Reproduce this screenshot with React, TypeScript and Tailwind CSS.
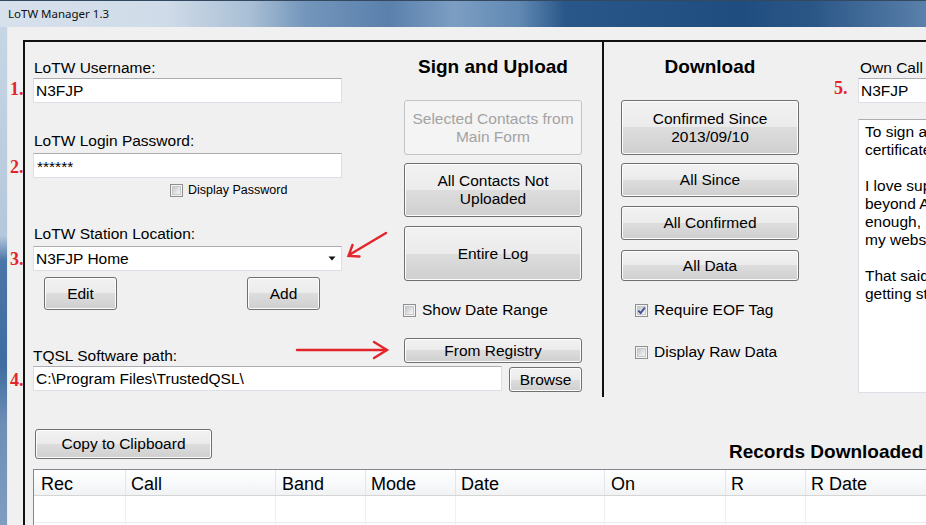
import React from 'react';

type KnopfProps = { children: React.ReactNode; className?: string; disabled?: boolean };

// Windows 7 style push button
const Knopf = ({ children, className = '', disabled = false }: KnopfProps) => (
  <div
    className={
      'flex shrink-0 items-center justify-center rounded-[3px] border text-center text-[15.5px] leading-[18px] ' +
      (disabled
        ? 'border-[#c2c4c6] bg-[#f4f4f4] text-[#a3a3a3] '
        : 'border-[#707070] bg-[linear-gradient(180deg,#f2f2f2_0%,#ebebeb_50%,#dddddd_50%,#cfcfcf_100%)] shadow-[inset_0_0_0_1px_#fcfcfc] ') +
      className
    }>
    {children}
  </div>
);

const Haken = ({ checked = false }: { checked?: boolean }) => (
  <span className="relative flex h-[13px] w-[13px] shrink-0 border border-[#8e8f8f] bg-[#f4f4f4] p-[1px]">
    <span className="flex-1 border border-[#c6c8ca] bg-[linear-gradient(135deg,#c3c7cb_0%,#e3e4e6_60%,#f6f6f6_100%)]" />
    {checked && (
      <svg className="absolute left-[1px] top-[1px]" width="9" height="9" viewBox="0 0 9 9">
        <path d="M1.3 4.6 L3.6 7 L7.8 1.6" fill="none" stroke="#3f5494" strokeWidth="1.9" />
      </svg>
    )}
  </span>
);

const Feld = ({ children, className = '' }: { children?: React.ReactNode; className?: string }) => (
  <div
    className={
      'flex shrink-0 items-center border border-[#dbdfe6] border-t-[#abadb3] bg-white pl-[2px] text-[15.5px] ' +
      className
    }>
    {children}
  </div>
);

const Nummer = ({ n, className }: { n: string; className: string }) => (
  <span
    className={
      "absolute font-['Liberation_Serif',serif] text-[18px] font-bold leading-[18px] text-[#e3242b] " +
      className
    }>
    {n}
  </span>
);

const spalten = [
  { name: 'Rec', w: 'w-[92px] pl-[7px]' },
  { name: 'Call', w: 'w-[150px] pl-[5px]' },
  { name: 'Band', w: 'w-[90px] pl-[6px]' },
  { name: 'Mode', w: 'w-[90px] pl-[5px]' },
  { name: 'Date', w: 'w-[149px] pl-[5px]' },
  { name: 'On', w: 'w-[121px] pl-[6px]' },
  { name: 'R', w: 'w-[80px] pl-[5px]' },
  { name: 'R Date', w: 'w-[150px] pl-[5px]' },
];

const infoText = [
  'To sign and upload your contacts, you need a',
  'certificate from the ARRL and TQSL installed.',
  '',
  'I love supporting LoTW, but it is well',
  'beyond AC Log to explain it all. Oddly',
  'enough, I get many questions, so please see',
  'my website for more details and links.',
  '',
  'That said, here are a few hints for',
  'getting started with the upload.',
];

const App = () => {
  return (
    <div className="relative h-[525px] w-[926px] overflow-hidden bg-[#6f8fb5] font-['Liberation_Sans',Arial,sans-serif] text-black">
      {/* title bar */}
      <div className="flex h-[27px] items-center border-t border-[#34485f] bg-[linear-gradient(90deg,#d6e1ec_0%,#cfdbe8_18%,#a9bfd5_27%,#7396bb_33%,#5a80ac_42%,#7c9ec3_49%,#6189b3_56%,#2a5789_61%,#204d80_80%,#2b5787_88%,#5a80ab_100%)] pl-[8px]">
        <span className="font-['Noto_Sans',sans-serif] text-[11.5px] leading-[16px] text-[#101010]">LoTW Manager 1.3</span>
      </div>

      <div className="flex h-[498px]">
        {/* window frame, left */}
        <div className="w-[8px] shrink-0 border-r border-[#e4ebf2] bg-[linear-gradient(180deg,#c7d6e5_0%,#b4c7db_42%,#4a75a8_47%,#3f6ca1_68%,#6f8fb6_80%,#7e9dc0_100%)]" />

        {/* client area */}
        <div className="flex-1 bg-[#f0f0f0] pl-[15px] pt-[13px]">
          <div className="flex h-full flex-col border-l-2 border-t-2 border-[#111]">
            {/* upper section */}
            <div className="flex h-[355px] shrink-0">
              {/* left part: fields + sign/upload */}
              <div className="flex w-[579px] shrink-0 flex-col border-r-2 border-[#111] pl-[8px]">
                <div className="flex">
                  {/* fields */}
                  <div className="flex w-[309px] shrink-0 flex-col">
                    <div className="ml-[1px] mt-[17px] h-[18px] text-[15.5px] leading-[18px]">LoTW Username:</div>
                    <Feld className="mt-[1px] h-[25px]">N3FJP</Feld>

                    <div className="ml-[1px] mt-[29px] h-[18px] text-[15.5px] leading-[18px]">LoTW Login Password:</div>
                    <Feld className="mt-[3px] h-[25px] items-start pl-[3px] pt-[1px] text-[13px]">******</Feld>

                    <div className="ml-[137px] mt-[5px] flex h-[14px] items-center gap-[5px]">
                      <Haken />
                      <span className="text-[12.5px] leading-[14px]">Display Password</span>
                    </div>

                    <div className="ml-[1px] mt-[28px] h-[18px] text-[15.5px] leading-[18px]">LoTW Station Location:</div>
                    <Feld className="mt-[3px] h-[25px] justify-between pr-[5px]">
                      <span>N3FJP Home</span>
                      <svg width="8" height="5" viewBox="0 0 8 5">
                        <polygon points="0.5,0.5 7.5,0.5 4,4.5" fill="#111" />
                      </svg>
                    </Feld>

                    <div className="mt-[6px] flex h-[33px]">
                      <Knopf className="ml-[11px] w-[73px]">Edit</Knopf>
                      <Knopf className="ml-[130px] w-[73px]">Add</Knopf>
                    </div>

                    <div className="mt-[37px] h-[18px] text-[15.5px] leading-[18px]">TQSL Software path:</div>
                  </div>

                  {/* sign and upload */}
                  <div className="ml-[62px] flex w-[178px] shrink-0 flex-col">
                    <div className="mt-[14px] h-[22px] whitespace-nowrap text-center text-[19px] font-bold leading-[22px]">Sign and Upload</div>
                    <Knopf disabled className="mt-[22px] h-[55px]">
                      Selected Contacts from
                      <br />
                      Main Form
                    </Knopf>
                    <Knopf className="mt-[8px] h-[54px]">
                      All Contacts Not
                      <br />
                      Uploaded
                    </Knopf>
                    <Knopf className="mt-[9px] h-[55px]">Entire Log</Knopf>
                    <div className="-ml-[1px] mt-[20px] flex h-[18px] items-center gap-[6px]">
                      <Haken />
                      <span className="text-[15.5px] leading-[18px]">Show Date Range</span>
                    </div>
                    <Knopf className="mt-[19px] h-[25px]">From Registry</Knopf>
                  </div>
                </div>

                {/* path row */}
                <div className="mt-[1px] flex">
                  <Feld className="h-[25px] w-[469px]">C:\Program Files\TrustedQSL\</Feld>
                  <Knopf className="ml-[7px] mt-[1px] h-[25px] w-[73px]">Browse</Knopf>
                </div>
              </div>

              {/* download */}
              <div className="flex w-[236px] shrink-0 flex-col pl-[17px]">
                <div className="mt-[14px] h-[22px] w-[178px] text-center text-[19px] font-bold leading-[22px]">Download</div>
                <Knopf className="mt-[22px] h-[55px] w-[178px]">
                  Confirmed Since
                  <br />
                  2013/09/10
                </Knopf>
                <Knopf className="mt-[8px] h-[34px] w-[178px]">All Since</Knopf>
                <Knopf className="mt-[9px] h-[34px] w-[178px]">All Confirmed</Knopf>
                <Knopf className="mt-[10px] h-[31px] w-[178px]">All Data</Knopf>
                <div className="ml-[14px] mt-[20px] flex h-[18px] items-center gap-[6px]">
                  <Haken checked />
                  <span className="text-[15.5px] leading-[18px]">Require EOF Tag</span>
                </div>
                <div className="ml-[14px] mt-[24px] flex h-[18px] items-center gap-[6px]">
                  <Haken />
                  <span className="text-[15.5px] leading-[18px]">Display Raw Data</span>
                </div>
              </div>

              {/* own call + info */}
              <div className="flex w-[300px] shrink-0 flex-col pl-[18px]">
                <div className="ml-[2px] mt-[17px] h-[18px] whitespace-nowrap text-[15.5px] leading-[18px]">Own Call Sign:</div>
                <Feld className="mt-[1px] h-[25px]">N3FJP</Feld>
                <div className="mt-[16px] h-[274px] overflow-hidden border border-[#dbdfe6] border-t-[#abadb3] bg-white pl-[6px] pt-[3px] text-[15.5px] leading-[18px]">
                  {infoText.map((z, i) => (
                    <div key={i} className="h-[18px] whitespace-nowrap">
                      {z}
                    </div>
                  ))}
                </div>
              </div>
            </div>

            {/* lower section */}
            <div className="flex shrink-0">
              <Knopf className="ml-[10px] mt-[32px] h-[30px] w-[177px]">Copy to Clipboard</Knopf>
              <div className="ml-[517px] mt-[44px] h-[22px] whitespace-nowrap text-[19px] font-bold leading-[22px]">
                Records Downloaded
              </div>
            </div>

            <div className="ml-[8px] mt-[6px] flex w-[960px] shrink-0 flex-col border-l border-t border-[#828790] bg-white">
              <div className="flex h-[26px] border-b border-[#d5d5d5] bg-[linear-gradient(180deg,#ffffff_0%,#f7f8fa_60%,#f1f2f4_100%)]">
                {spalten.map((s) => (
                  <div key={s.name} className={'shrink-0 border-r border-[#e3e5e8] pt-[3px] text-[18px] leading-[22px] ' + s.w}>
                    {s.name}
                  </div>
                ))}
              </div>
              <div className="flex h-[27px] border-b border-[#ececec]">
                {spalten.map((s) => (
                  <div key={s.name} className={'shrink-0 border-r border-[#efefef] ' + s.w} />
                ))}
              </div>
              <div className="flex h-[27px]">
                {spalten.map((s) => (
                  <div key={s.name} className={'shrink-0 border-r border-[#efefef] ' + s.w} />
                ))}
              </div>
            </div>
          </div>
        </div>
      </div>

      {/* red annotations */}
      <Nummer n="1." className="left-[10px] top-[80px]" />
      <Nummer n="2." className="left-[10px] top-[158px]" />
      <Nummer n="3." className="left-[10px] top-[250px]" />
      <Nummer n="4." className="left-[10px] top-[371px]" />
      <Nummer n="5." className="left-[834px] top-[79px]" />

      <svg className="absolute left-0 top-0" width="926" height="525" viewBox="0 0 926 525" fill="none">
        <g stroke="#e3242b" strokeWidth="2.4" strokeLinecap="round">
          <line x1="386" y1="233" x2="349" y2="255" />
          <polyline points="352.5,245 348.5,256 359.5,256.5" />
          <line x1="297" y1="350" x2="386" y2="350" />
          <polyline points="374,342 387,350 374,358" />
        </g>
      </svg>
    </div>
  );
};

export default App;
